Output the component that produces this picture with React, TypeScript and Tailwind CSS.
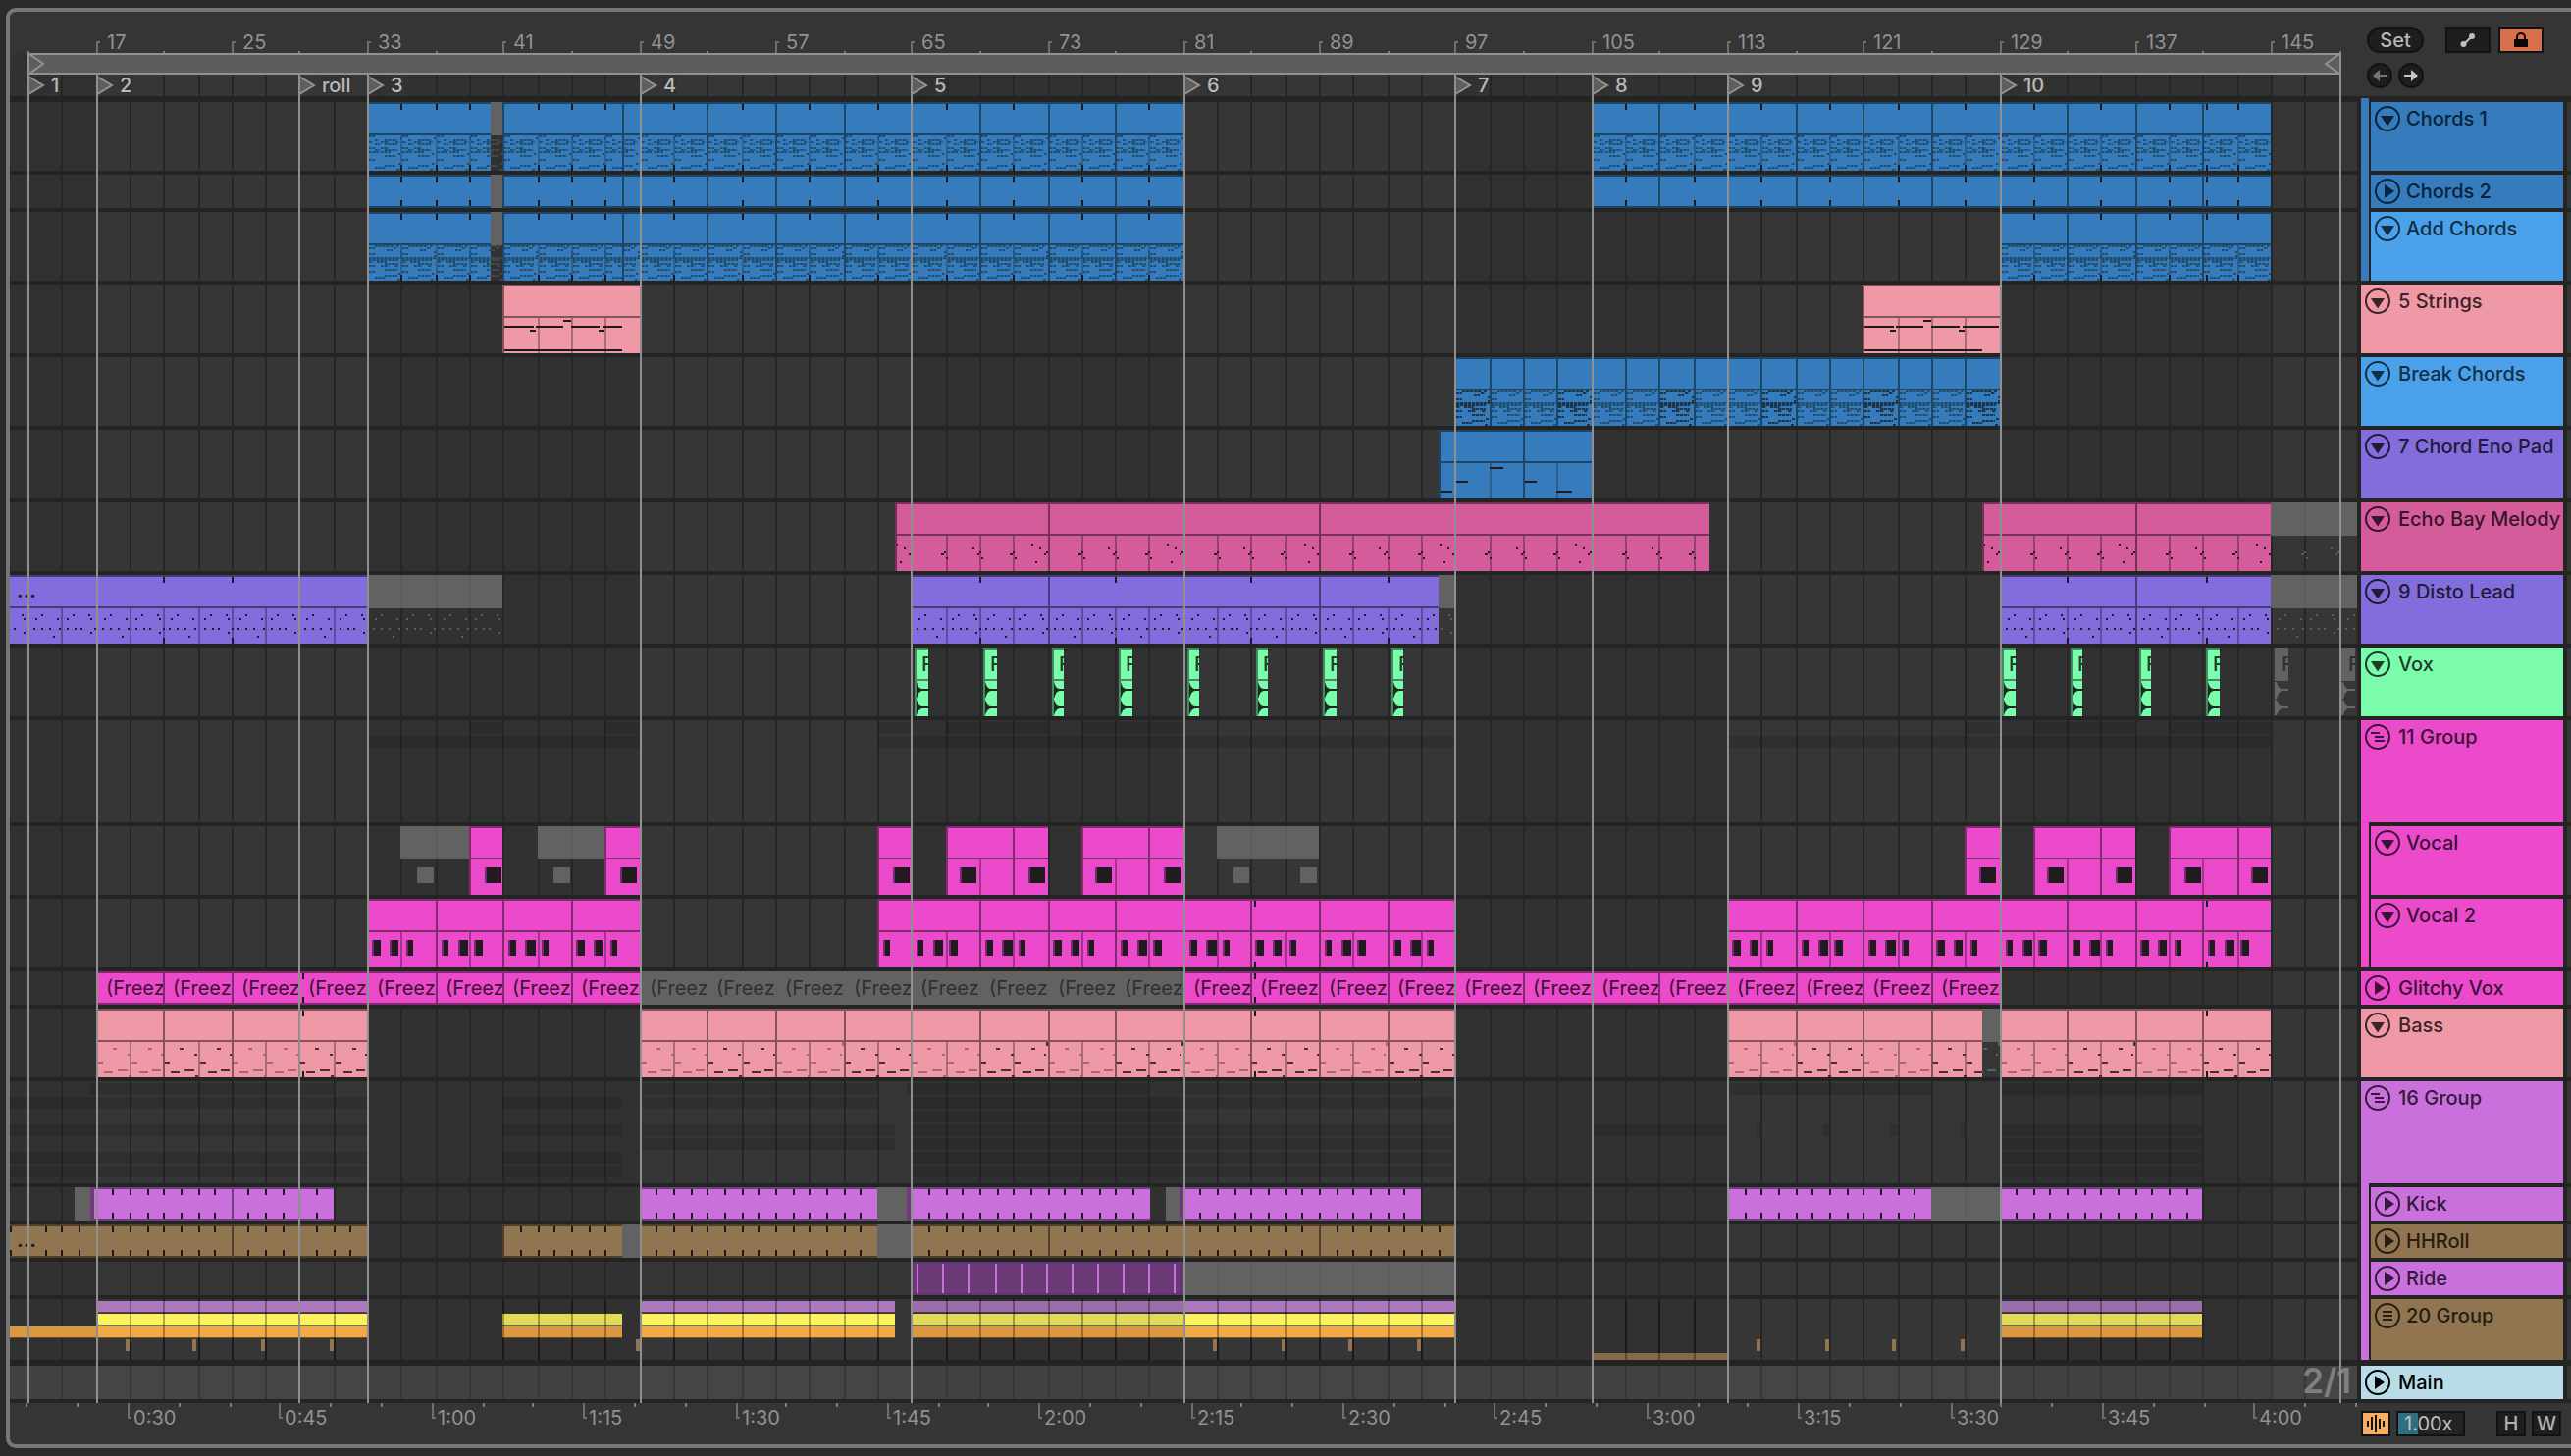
import React from "react";

/* ---------- time axis ---------- */

const PX_PER_BAR = 17.321;
const BAR_17 = 98.08;
const VIEW_LEFT = 10;
const START = 12;
const END = 152;

const even = (v: number) => 2 * Math.floor(v / 2);
const x = (bar: number) => even(BAR_17 + (bar - 17) * PX_PER_BAR) - VIEW_LEFT;
const range = (from: number, to: number, step: number) => {
  const out: number[] = [];
  for (let v = from; v < to; v += step) out.push(v);
  return out;
};

/* ---------- palette ---------- */

type Tone = {
  fill: string;
  edge: string;
  border: string;
  grid: string;
  soft: string;
  hard: string;
  ink: string;
};

const tones: Record<string, Tone> = {
  blue: { fill: "bg-[#367bbc]", edge: "bg-[#1c4566]", border: "border-[#1c4566]", grid: "bg-[#2a5f90]", soft: "fill-[#2a628f]", hard: "fill-[#214d70]", ink: "text-[#07243a]" },
  sky: { fill: "bg-[#4aa1ea]", edge: "bg-[#1c4566]", border: "border-[#1c4566]", grid: "bg-[#2a5f90]", soft: "fill-[#2a628f]", hard: "fill-[#1f4a6b]", ink: "text-[#122f47]" },
  pink: { fill: "bg-[#f099a6]", edge: "bg-[#85535b]", border: "border-[#85535b]", grid: "bg-[#a96b75]", soft: "fill-[#a46a73]", hard: "fill-[#4a2e33]", ink: "text-[#3b2427]" },
  violet: { fill: "bg-[#836cdb]", edge: "bg-[#473b78]", border: "border-[#473b78]", grid: "bg-[#5d4d9c]", soft: "fill-[#1c1826]", hard: "fill-[#1c1826]", ink: "text-[#211b38]" },
  rose: { fill: "bg-[#d45c9a]", edge: "bg-[#763355]", border: "border-[#763355]", grid: "bg-[#94416c]", soft: "fill-[#2a1620]", hard: "fill-[#2a1620]", ink: "text-[#36162a]" },
  green: { fill: "bg-[#7bfcad]", edge: "bg-[#448a60]", border: "border-[#448a60]", grid: "bg-[#448a60]", soft: "fill-[#1c3a2a]", hard: "fill-[#1c3a2a]", ink: "text-[#1d3d2a]" },
  magenta: { fill: "bg-[#eb4acb]", edge: "bg-[#822971]", border: "border-[#822971]", grid: "bg-[#a5348e]", soft: "fill-[#241a22]", hard: "fill-[#241a22]", ink: "text-[#3c1134]" },
  orchid: { fill: "bg-[#ca70dd]", edge: "bg-[#6f3d7a]", border: "border-[#6f3d7a]", grid: "bg-[#8f4f9c]", soft: "fill-[#2b1730]", hard: "fill-[#2b1730]", ink: "text-[#321b38]" },
  brown: { fill: "bg-[#917450]", edge: "bg-[#4f3e2a]", border: "border-[#4f3e2a]", grid: "bg-[#5d4a33]", soft: "fill-[#231b12]", hard: "fill-[#231b12]", ink: "text-[#241d14]" },
  ice: { fill: "bg-[#b8dde9]", edge: "bg-[#b8dde9]", border: "border-[#b8dde9]", grid: "bg-[#b8dde9]", soft: "fill-black", hard: "fill-black", ink: "text-black" },
};

/* ---------- note patterns, one unit = two bars: [x, y, w, h] ---------- */

type Note = [number, number, number, number?];
type Unit = { notes: Note[]; style: "soft" | "hard" | "dashed" | "dashedHard" };

const chordNotes: Note[] = [
  [0, 0, 6], [32, 2, 2], [6, 4, 4], [16, 4, 13], [0, 6, 4], [12, 6, 8], [27, 6, 4], [6, 8, 5], [16, 8, 13],
  [0, 12, 6], [12, 12, 8], [6, 14, 5], [16, 14, 13], [0, 16, 10], [12, 16, 10], [30, 18, 3], [16, 20, 12],
  [0, 24, 6], [30, 28, 3], [16, 30, 11], [6, 32, 10], [28, 34, 4],
];
const addNotes: Note[] = [
  [6, 0, 20], [28, 0, 3], [0, 2, 6], [25, 2, 4], [18, 4, 6], [32, 6, 2], [0, 8, 6], [32, 10, 2],
  [0, 12, 34], [0, 14, 30], [0, 16, 4], [8, 16, 10], [20, 18, 10], [0, 20, 6], [12, 20, 8], [16, 18, 13], [26, 20, 4],
  [16, 24, 13], [0, 26, 6], [30, 28, 3], [16, 30, 13], [6, 32, 10], [29, 34, 3],
];
const echoA: Note[] = [[29, 18, 3], [32, 16, 2], [34, 22, 2]];
const echoB: Note[] = [[25, 12, 2], [30, 18, 2], [32, 16, 2], [34, 22, 2]];
const echoC: Note[] = [[17, 8, 2], [25, 12, 2], [21, 26, 2], [30, 18, 2], [32, 16, 2]];
const distoA: Note[] = [[12, 6, 2], [6, 10, 2], [28, 10, 2], [4, 20, 2], [12, 20, 2], [20, 20, 2], [30, 20, 2], [24, 28, 2]];
const distoB: Note[] = [[10, 6, 2], [26, 6, 2], [4, 10, 2], [28, 10, 2], [4, 20, 2], [12, 20, 2], [18, 20, 2], [32, 20, 2], [28, 24, 2]];
const bassA: Note[] = [[15, 6, 4], [0, 20, 5], [6, 30, 9], [20, 28, 10], [31, 34, 3], [30, 12, 3]];
const bassB: Note[] = [[17, 6, 4], [0, 20, 6], [8, 30, 9], [21, 28, 9], [30, 12, 2], [32, 0, 2, 4]];

const soft = (notes: Note[]): Unit => ({ notes, style: "soft" });
const hard = (notes: Note[]): Unit => ({ notes, style: "hard" });
const dashed = (notes: Note[]): Unit => ({ notes, style: "dashed" });
const dashedHard = (notes: Note[]): Unit => ({ notes, style: "dashedHard" });

const patterns: Record<string, Unit[]> = {
  chords: [dashed(chordNotes)],
  add: [dashed(addNotes)],
  break: [dashed(addNotes), dashedHard(addNotes), dashed(addNotes)],
  echo: [soft(echoA), soft(echoB), soft(echoA), soft(echoC)],
  disto: [soft(distoA), soft(distoB)],
  bass: [soft(bassA), soft(bassB), hard(bassA), hard(bassB)],
};

const box = (bx: number, y: number, w: number, h = 2) => `M${bx} ${y}h${w}v${h}h${-w}z`;

function patternPaths(name: string, s: number, e: number) {
  const units = patterns[name];
  let low = "";
  let high = "";
  let deep = "";
  const first = 65 + 2 * Math.floor((s - 65) / 2);
  for (const bar of range(first, e, 2)) {
    const n = Math.round((bar - 65) / 2);
    const unit = units[((n % units.length) + units.length) % units.length];
    const ox = x(bar) + 2;
    for (const [nx, y, w, h] of unit.notes) {
      if (unit.style === "soft") low += box(ox + nx, y, w, h);
      else if (unit.style === "hard") high += box(ox + nx, y, w, h);
      else {
        low += box(ox + nx, y, w, h);
        for (let k = 0; k < w; k += 4) {
          if (unit.style === "dashed") high += box(ox + nx + k, y, Math.min(2, w - k), h);
          else deep += box(ox + nx + k, y, Math.min(3, w - k), h);
        }
      }
    }
  }
  return { low, high, deep };
}

/* ---------- session data ---------- */

type Clip = {
  s: number;
  e: number;
  cuts?: number[];
  ticks?: number[];
  off?: boolean;
  label?: string;
  more?: boolean;
};
type Extra = { px: number; y: number; w: number; h?: number; off?: boolean };
type Lane = {
  id: string;
  height: string;
  tone: string;
  tall?: boolean;
  pattern?: string;
  clips: Clip[];
  extras?: Extra[];
  kind?: "vox" | "overview" | "stack" | "ride" | "blocks" | "main";
};

const seg = (s: number, e: number, step: number, more: Partial<Clip> = {}): Clip => ({
  s,
  e,
  cuts: range(s + step, e, step),
  ...more,
});

const chordsLeft: Clip[] = [
  { s: 33, e: 40.25, ticks: [35, 37, 39] },
  { s: 40.25, e: 41, off: true },
  { s: 41, e: 49, cuts: [48], ticks: [43, 45, 47] },
  seg(49, 81, 4, { ticks: range(51, 81, 4) }),
];
const everyBar = (s: number, e: number, skip: number[] = []) => range(s + 1, e, 1).filter((b) => !skip.includes(b));

const strings = (start: number, tail: number): Extra[] => {
  const o = x(start);
  return [
    { px: o + 2, y: 8, w: 30 }, { px: o + 34, y: 8, w: 28 }, { px: o + 62, y: 2, w: 8 }, { px: o + 28, y: 12, w: 6 },
    { px: o + 70, y: 8, w: 29 }, { px: o + 102, y: 8, w: tail }, { px: o + 98, y: 12, w: 6 }, { px: o + 2, y: 32, w: 120 },
  ];
};

const vocalClips: Clip[] = [
  { s: 35, e: 39, off: true }, { s: 39, e: 41 },
  { s: 43, e: 47, off: true }, { s: 47, e: 49 },
  { s: 63, e: 65 }, { s: 67, e: 73, cuts: [71] }, { s: 75, e: 81, cuts: [79] },
  { s: 83, e: 89, off: true },
  { s: 127, e: 129 }, { s: 131, e: 137, cuts: [135] }, { s: 139, e: 145, cuts: [143] },
];
const vocalBlocks: Extra[] = [
  { px: 415, y: 8, w: 17, off: true }, { px: 554, y: 8, w: 17, off: true },
  { px: 1247, y: 8, w: 16, off: true }, { px: 1315, y: 8, w: 17, off: true },
  ...[486, 624, 902, 970, 1040, 1108, 1178, 2009, 2078, 2148, 2218, 2286].map((px) => ({ px, y: 8, w: 15, h: 16 })),
];

const vocal2Blocks: Extra[] = [...range(33, 49, 4), ...range(65, 97, 4), ...range(113, 145, 4)].flatMap((bar, i) => {
  const o = x(bar);
  const shapes = [
    [[7, 7], [25, 7], [42, 5]],
    [[8, 5], [25, 8], [41, 7]],
    [[8, 6], [25, 9], [42, 5]],
  ][i % 3];
  return shapes.map(([dx, w]) => ({ px: o + dx, y: 8, w, h: 16 }));
});
vocal2Blocks.push({ px: 892, y: 8, w: 5, h: 16 });

const glitchy: Clip[] = range(17, 129, 4).map((s) => ({
  s,
  e: s + 4,
  off: s >= 49 && s < 81,
  label: "(Freez",
  ticks: s === 29 || s === 85 ? [s + 0.15] : [],
}));

const vox: Clip[] = [
  ...range(65.25, 97, 4).map((s) => ({ s, e: s + 0.75, label: "F" })),
  ...range(129.2, 145, 4).map((s) => ({ s, e: s + 0.75, label: "F" })),
  { s: 145.2, e: 146, label: "F", off: true },
  { s: 149.2, e: 150, label: "F", off: true },
];

const lanes: Lane[] = [
  { id: "chords1", height: "h-[74px]", tone: "blue", tall: true, pattern: "chords", clips: [...chordsLeft, seg(105, 145, 4, { ticks: [...range(107, 145, 4), 141.15] })] },
  { id: "chords2", height: "h-[38px]", tone: "blue", clips: [...chordsLeft, seg(105, 145, 4, { ticks: [...range(107, 145, 4), 141.15] })] },
  { id: "add", height: "h-[74px]", tone: "blue", tall: true, pattern: "add", clips: [...chordsLeft, seg(129, 145, 4, { ticks: [...range(131, 145, 4), 141.15] })] },
  { id: "strings", height: "h-[74px]", tone: "pink", tall: true, clips: [{ s: 41, e: 49 }, { s: 121, e: 129 }], extras: [...strings(41, 20), ...strings(121, 37)] },
  { id: "break", height: "h-[74px]", tone: "blue", tall: true, pattern: "break", clips: [seg(97, 129, 2)] },
  {
    id: "eno", height: "h-[74px]", tone: "blue", tall: true, clips: [{ s: 96, e: 105, cuts: [101] }],
    extras: [{ px: 1508, y: 4, w: 14 }, { px: 1474, y: 18, w: 12 }, { px: 1544, y: 18, w: 12 }, { px: 1458, y: 28, w: 12 }, { px: 1576, y: 28, w: 16 }],
  },
  { id: "echo", height: "h-[74px]", tone: "rose", tall: true, pattern: "echo", clips: [{ s: 64, e: 112, cuts: [73, 81, 89, 97] }, { s: 128, e: 145, cuts: [137] }, { s: 145, e: END, off: true }] },
  {
    id: "disto", height: "h-[74px]", tone: "violet", tall: true, pattern: "disto",
    clips: [
      { s: START - 1, e: 33, ticks: [21, 25], more: true }, { s: 33, e: 41, off: true },
      { s: 65, e: 96, cuts: [73, 81, 89], ticks: [69, 77, 85, 93] }, { s: 96, e: 97, off: true },
      { s: 129, e: 145, cuts: [137], ticks: [133, 141.15] }, { s: 145, e: END, off: true },
    ],
  },
  { id: "vox", height: "h-[74px]", tone: "green", tall: true, kind: "vox", clips: vox },
  { id: "group11", height: "h-[108px]", tone: "magenta", kind: "overview", clips: [] },
  { id: "vocal", height: "h-[74px]", tone: "magenta", tall: true, kind: "blocks", clips: vocalClips, extras: vocalBlocks },
  { id: "vocal2", height: "h-[74px]", tone: "magenta", tall: true, kind: "blocks", clips: [seg(33, 49, 4), { s: 63, e: 97, cuts: range(65, 97, 4), ticks: [85.15] }, seg(113, 145, 4, { ticks: [141.15] })], extras: vocal2Blocks },
  { id: "glitchy", height: "h-[38px]", tone: "magenta", clips: glitchy },
  {
    id: "bass", height: "h-[74px]", tone: "pink", tall: true, pattern: "bass",
    clips: [seg(17, 33, 4, { ticks: [29.15] }), seg(49, 97, 4, { ticks: [85.15] }), seg(113, 128, 4), { s: 128, e: 129, off: true }, seg(129, 145, 4, { ticks: [141.15] })],
  },
  { id: "group16", height: "h-[108px]", tone: "orchid", kind: "overview", clips: [] },
  {
    id: "kick", height: "h-[38px]", tone: "orchid",
    clips: [
      { s: 15.75, e: 16.7, off: true }, { s: 16.7, e: 31, cuts: [16.8, 25], ticks: everyBar(17, 31, [25, 29]) },
      { s: 49, e: 63, ticks: everyBar(49, 63) }, { s: 63, e: 64.7, off: true },
      { s: 64.7, e: 79.1, cuts: [64.8], ticks: everyBar(65, 79) }, { s: 80, e: 80.75, off: true },
      { s: 80.75, e: 95, cuts: [80.85], ticks: everyBar(81, 95) },
      { s: 113, e: 125, ticks: everyBar(113, 125) }, { s: 125, e: 129, off: true }, { s: 129, e: 141, ticks: everyBar(129, 141) },
    ],
  },
  {
    id: "hhroll", height: "h-[38px]", tone: "brown",
    clips: [
      { s: START - 1, e: 33, cuts: [25], ticks: [12, ...everyBar(13, 33, [17, 25, 29])], more: true },
      { s: 41, e: 48, ticks: everyBar(41, 48) }, { s: 48, e: 49, off: true },
      { s: 49, e: 63, ticks: everyBar(49, 63) }, { s: 63, e: 65, off: true },
      { s: 65, e: 97, cuts: [73, 89], ticks: everyBar(65, 97, [73, 81, 89]) },
    ],
  },
  { id: "ride", height: "h-[38px]", tone: "orchid", kind: "ride", clips: [{ s: 81, e: 97, off: true }] },
  { id: "group20", height: "h-[68px]", tone: "brown", kind: "stack", clips: [] },
  { id: "main", height: "h-[38px]", tone: "ice", kind: "main", clips: [] },
];

const overview: Record<string, [string, [number, number][]][]> = {
  group11: [
    ["top-[2px]", [[39, 41], [47, 49], [63, 65], [67, 73], [75, 81], [127, 129], [131, 137], [139, 145]]],
    ["top-[16px]", [[33, 49], [63, 97], [113, 145]]],
  ],
  group16: [
    ["top-[2px]", [[16.7, 31], [49, 63], [64.7, 79], [80.75, 95], [113, 125], [129, 141]]],
    ["top-[16px]", [[11, 33], [41, 48], [49, 63], [65, 97]]],
    ["top-[30px]", [[65, 81]]],
    ["top-[44px]", [[11, 33], [41, 48], [49, 64], [65, 97], [105, 113], [114.7, 115], [118.7, 119], [122.6, 123], [126.7, 127], [129, 141]]],
    ["top-[58px]", [[49, 64], [65, 97], [129, 141]]],
    ["top-[72px]", [[11, 33], [41, 48], [65, 97], [129, 141]]],
    ["top-[86px]", [[11, 33], [41, 48], [65, 97], [129, 141]]],
  ],
};

/* ---------- timeline pieces ---------- */

const VLine = ({ at, className }: { at: number; className: string }) => (
  <div className={`absolute w-[2px] ${className}`} style={{ left: at }} />
);

function Grid() {
  return (
    <div className="absolute inset-0 overflow-hidden bg-[#363636]" aria-hidden>
      {[1, 33, 65, 97, 129].map((b) => (
        <div key={b} className="absolute inset-y-0 bg-[#313131]" style={{ left: x(b), width: x(b + 16) - x(b) }} />
      ))}
      {range(13, END, 2).map((b) => (
        <VLine key={b} at={x(b)} className="inset-y-0 bg-[#262626]" />
      ))}
    </div>
  );
}

function Notes({ lane, clip, left }: { lane: Lane; clip: Clip; left: number }) {
  if (!lane.pattern) return null;
  const tone = tones[lane.tone];
  const { low, high, deep } = patternPaths(lane.pattern, clip.s, clip.e);
  const muted = lane.tone === "blue" ? "fill-[#444444]" : "fill-[#5c5c5c]";
  return (
    <svg className="absolute inset-0 h-full w-full" aria-hidden>
      <g transform={`translate(${-left} 0)`}>
        <path d={low} className={clip.off ? muted : tone.soft} />
        <path d={high} className={clip.off ? muted : tone.hard} />
        <path d={deep} className="fill-[#1b3549]" />
      </g>
    </svg>
  );
}

function Wave({ off }: { off?: boolean }) {
  return (
    <svg className="absolute inset-0 h-full w-full" aria-hidden>
      <path
        d="M0 1L2 1C4 7 5 8 9 8H16V10H9C5 10 4 12 2 18L0 19ZM2 19C4 25 5 26 9 26H16V28H9C5 28 4 30 2 35H0V19Z"
        className={off ? "fill-[#676767]" : "fill-[#1c2a22]"}
      />
    </svg>
  );
}

function ClipView({ lane, clip }: { lane: Lane; clip: Clip }) {
  const tone = tones[lane.tone];
  const left = x(clip.s);
  const width = x(clip.e) - left;
  const inner = range(1 + 2 * Math.ceil((clip.s - 0.99) / 2), clip.e, 2).filter((b) => b < clip.e);
  const labelClass = `block truncate text-clip leading-[30px] text-[20px] ${lane.kind === "vox" ? "pl-[7px] font-medium" : "pl-[10px]"} ${clip.off ? "text-[#303030]" : tone.ink}`;

  if (clip.off) {
    return (
      <div className="absolute inset-y-0 flex flex-col overflow-hidden" style={{ left, width }}>
        <div className="h-[34px] shrink-0 bg-[#626262] py-[2px]">
          {clip.label && <span className={labelClass}>{clip.label}</span>}
        </div>
        {lane.tall && (
          <div className="relative flex-1">
            <Notes lane={lane} clip={clip} left={left} />
            {lane.kind === "vox" && <Wave off />}
          </div>
        )}
        {!clip.label && inner.map((b) => <VLine key={b} at={x(b) - left} className="top-0 h-[34px] bg-black/5" />)}
      </div>
    );
  }

  return (
    <div className={`absolute inset-y-0 flex flex-col overflow-hidden ${tone.fill}`} style={{ left, width }}>
      <div className={`h-[34px] shrink-0 border-y-2 ${tone.border}`}>
        {clip.label && <span className={labelClass}>{clip.label}</span>}
        {clip.more && <span className="block pl-[23px] text-[20px] leading-[28px] font-bold text-black/80">...</span>}
      </div>
      {lane.tall && (
        <div className="relative flex-1">
          {lane.kind !== "vox" && inner.map((b) => <VLine key={b} at={x(b) - left} className={`inset-y-0 ${tone.grid}`} />)}
          <Notes lane={lane} clip={clip} left={left} />
          {lane.kind === "vox" && <Wave />}
        </div>
      )}
      <VLine at={0} className={`inset-y-0 ${tone.edge}`} />
      {clip.cuts?.map((b) => <VLine key={b} at={x(b) - left} className={`inset-y-0 ${tone.edge}`} />)}
      {clip.ticks?.map((b) => (
        <React.Fragment key={b}>
          <VLine at={x(b) - left} className="top-[2px] h-[6px] bg-[#1a1a1a]" />
          <VLine at={x(b) - left} className={`h-[6px] bg-[#1a1a1a] ${lane.tall ? "bottom-0" : "bottom-[2px]"}`} />
        </React.Fragment>
      ))}
    </div>
  );
}

function Extras({ lane }: { lane: Lane }) {
  return (
    <svg className="absolute inset-x-0 top-[34px] h-[36px] w-full" aria-hidden>
      {lane.extras!.map((n, i) => (
        <g key={i}>
          {lane.kind === "blocks" && !n.off && <rect x={n.px - 2} y={n.y} width={2} height={16} className="fill-[#7a2a6b]" />}
          <rect
            x={n.px}
            y={n.y}
            width={n.w}
            height={lane.kind === "blocks" ? 16 : (n.h ?? 2)}
            className={n.off ? "fill-[#626262]" : lane.kind === "blocks" ? "fill-[#211a20]" : "fill-[#1c1c1c]"}
          />
        </g>
      ))}
    </svg>
  );
}

function Overview({ id }: { id: string }) {
  return (
    <>
      {overview[id].map(([top, spans]) =>
        spans.map(([s, e]) => (
          <div key={`${top}${s}`} className={`absolute h-[12px] bg-black/12 ${top}`} style={{ left: x(s), width: x(e) - x(s) }} />
        )),
      )}
    </>
  );
}

function Stack() {
  const body: [number, number, boolean][] = [[17, 33, true], [49, 64, true], [65, 81, false], [81, 97, true], [129, 141, false]];
  const short: [number, number, boolean] = [41, 48, false];
  const bars = (top: string, on: string, dim: string, spans: [number, number, boolean][]) =>
    spans.map(([s, e, lit]) => (
      <div
        key={`${top}${s}`}
        className={`absolute h-[12px] border-b border-black/50 ${top} ${lit ? on : dim}`}
        style={{ left: x(s), width: x(e) - x(s) }}
      />
    ));
  const hits = [118, 186, 256, 326, 638, 1226, 1296, 1364, 1434, 1780, 1850, 1918, 1988];
  return (
    <>
      {bars("top-[2px]", "bg-[#ad78be]", "bg-[#9b6dab]", body)}
      {bars("top-[15px]", "bg-[#fdf25e]", "bg-[#e3da57]", [...body, short])}
      {bars("top-[28px]", "bg-[#f2a947]", "bg-[#da9840]", [[START - 1, 17, false], ...body, short])}
      {hits.map((h) => (
        <div key={h} className="absolute top-[41px] h-[12px] w-[4px] bg-[#917450]" style={{ left: h }} />
      ))}
      <div className="absolute bottom-0 h-[7px] bg-[#86684a]" style={{ left: x(105), width: x(113) - x(105) }} />
      {[...range(17, 33, 2), ...range(41, 48, 2), ...range(49, 97, 2), ...range(105, 113, 2), ...range(129, 141, 2)].map((b) => (
        <VLine key={b} at={x(b)} className="inset-y-0 bg-black/30" />
      ))}
    </>
  );
}

function Ride() {
  return (
    <div
      className="absolute inset-y-0 overflow-hidden border-y-2 border-[#643570] bg-[#6b3a76]"
      style={{ left: x(65), width: x(81) - x(65) }}
    >
      {range(65.35, 81, 1.51).map((b) => (
        <VLine key={b} at={x(b) - x(65)} className="inset-y-0 bg-[#ca70dd]" />
      ))}
    </div>
  );
}

function LaneView({ lane }: { lane: Lane }) {
  const gap = lane.id === "group20" ? "border-b-[6px]" : "border-b-4";
  return (
    <div className={`relative overflow-hidden border-[#242424] ${gap} ${lane.height} ${lane.kind === "main" ? "bg-white/8" : ""}`}>
      {lane.clips.map((c) => <ClipView key={c.s} lane={lane} clip={c} />)}
      {lane.extras && <Extras lane={lane} />}
      {lane.kind === "overview" && <Overview id={lane.id} />}
      {lane.kind === "stack" && <Stack />}
      {lane.kind === "ride" && <Ride />}
      {lane.kind === "main" && (
        <span className="absolute right-[6px] top-0 text-[35px] leading-[30px] font-semibold text-[#7f7f7f]">2/1</span>
      )}
    </div>
  );
}

const locators: [number, string][] = [
  [13, "1"], [17, "2"], [29, "roll"], [33, "3"], [49, "4"], [65, "5"], [81, "6"], [97, "7"], [105, "8"], [113, "9"], [129, "10"],
];

function BeatRuler() {
  return (
    <div className="relative h-[42px]">
      {range(13, 150, 4).map((b) =>
        (b - 17) % 8 === 0 ? (
          <div key={b} className="absolute bottom-0 flex h-[22px]" style={{ left: x(b) }}>
            <i className="mt-[10px] w-[2px] bg-[#6e6e6e]" />
            <i className="mt-[10px] h-[2px] w-[2px] bg-[#6e6e6e]" />
            <span className="ml-[7px] text-[20px] leading-[22px] text-[#919191]">{b}</span>
          </div>
        ) : (
          <VLine key={b} at={x(b)} className="bottom-0 h-[2px] bg-[#7a7a7a]" />
        ),
      )}
    </div>
  );
}

function LoopBar() {
  const left = x(13);
  return (
    <div className="relative h-[22px] bg-[#323232]">
      <div className="absolute inset-y-0 flex justify-between border-2 border-[#919191] bg-[#5d5d5d]" style={{ left, width: x(149) + 2 - left }}>
        <svg className="h-[18px] w-[16px]" viewBox="0 0 16 18" fill="none" aria-hidden>
          <path d="M0 -1L14 9L0 19" stroke="#919191" strokeWidth="2" />
        </svg>
        <svg className="h-[18px] w-[16px]" viewBox="0 0 16 18" fill="none" aria-hidden>
          <path d="M16 -1L2 9L16 19" stroke="#919191" strokeWidth="2" />
        </svg>
      </div>
      <div className="absolute inset-y-0 right-0 bg-[#353535]" style={{ left: x(149) + 2 }} />
    </div>
  );
}

function LocatorRow() {
  return (
    <div className="relative h-[22px]">
      {locators.map(([b, name]) => (
        <button key={b} type="button" className="absolute flex h-[22px] items-center" style={{ left: x(b) }}>
          <svg className="h-[22px] w-[18px]" viewBox="0 0 18 22" aria-hidden>
            <path d="M1 2L16 11L1 20Z" fill="#5e5e5e" stroke="#939393" strokeWidth="2" />
          </svg>
          <span className="ml-[5px] bg-[#333333] px-[1px] text-[20px] leading-[22px] font-medium text-[#b9b9b9]">{name}</span>
        </button>
      ))}
    </div>
  );
}

function TimeRuler() {
  return (
    <div className="relative h-[42px] overflow-hidden">
      {range(-2, 45, 1).map((n) => {
        const left = even(130.9 + (n * 154.78) / 3) - VIEW_LEFT;
        if (n % 3 !== 0) return <VLine key={n} at={left} className="top-0 h-[4px] bg-[#7a7a7a]" />;
        const sec = 30 + n * 5;
        return (
          <div key={n} className="absolute top-0 flex h-[28px] items-start" style={{ left }}>
            <i className="h-[16px] w-[2px] bg-[#6e6e6e]" />
            <i className="mt-[14px] h-[2px] w-[2px] bg-[#6e6e6e]" />
            <span className="mt-[4px] ml-[2px] text-[20px] leading-[22px] text-[#919191]">
              {Math.floor(sec / 60)}:{String(sec % 60).padStart(2, "0")}
            </span>
          </div>
        );
      })}
    </div>
  );
}

function Timeline() {
  return (
    <section className="flex min-w-0 flex-1 flex-col overflow-hidden" aria-label="Arrangement">
      <BeatRuler />
      <LoopBar />
      <div className="relative flex flex-col">
        <Grid />
        <LocatorRow />
        <div className="relative h-[6px] bg-[#242424]" />
        {lanes.map((l) => <LaneView key={l.id} lane={l} />)}
        {locators.map(([b]) => <VLine key={b} at={x(b)} className="inset-y-0 bg-[#8f8f8f]" />)}
        <VLine at={x(149)} className="inset-y-0 bg-[#8f8f8f]" />
      </div>
      <TimeRuler />
    </section>
  );
}

/* ---------- track headers ---------- */

type Icon = "down" | "right" | "group" | "list";

const iconPaths: Record<Icon, React.ReactNode> = {
  down: <path d="M6 10H20L13 20.5Z" fill="currentColor" />,
  right: <path d="M10 6V20L20 13Z" fill="currentColor" />,
  group: <path d="M6 9H15M10 13H19M10 17H20" stroke="currentColor" strokeWidth="2" />,
  list: <path d="M8 9H18M8 13H18M8 17H18" stroke="currentColor" strokeWidth="2" />,
};

function Header({ name, tone, icon, height, nested }: { name: string; tone: string; icon: Icon; height: string; nested?: boolean }) {
  const t = tones[tone];
  return (
    <div className={`flex shrink-0 items-start overflow-hidden ${height} ${t.fill} ${t.ink}`}>
      <div className={`flex h-[34px] min-w-0 items-center pl-[4px] ${nested ? "gap-[6px]" : "gap-[8px]"}`}>
        <button type="button" aria-label={`Fold ${name}`} className="h-[26px] w-[26px] shrink-0">
          <svg viewBox="0 0 26 26" className="h-[26px] w-[26px]" fill="none" aria-hidden>
            <circle cx="13" cy="13" r="12" stroke="currentColor" strokeWidth="2" />
            {iconPaths[icon]}
          </svg>
        </button>
        <span className="overflow-hidden text-[20px] leading-[26px] font-medium whitespace-nowrap">{name}</span>
      </div>
    </div>
  );
}

function Group({ rail, children }: { rail: string; children: React.ReactNode }) {
  return (
    <div className="flex">
      <div className={`-mt-1 w-2 shrink-0 ${rail}`} />
      <div className="ml-[2px] flex min-w-0 flex-1 flex-col gap-1">{children}</div>
    </div>
  );
}

const square = "flex h-[26px] items-center justify-center border-2 border-[#121212]";

function Headers() {
  return (
    <aside className="flex w-[218px] shrink-0 flex-col" aria-label="Tracks">
      <div className="h-[86px] pt-[16px] pl-[10px]">
        <div className="flex">
          <button type="button" className="h-[26px] w-[58px] rounded-full border-2 border-[#121212] bg-[#1e1e1e] text-[20px] leading-[22px] font-medium text-[#b8b8b8]">Set</button>
          <button type="button" aria-label="Automation mode" className={`${square} ml-[22px] w-[46px] bg-[#1e1e1e]`}>
            <svg viewBox="0 0 16 16" className="h-[16px] w-[16px]" aria-hidden>
              <path d="M4 12L12 4" stroke="#c0c0c0" strokeWidth="2" />
              <circle cx="3.5" cy="12" r="3" fill="#c0c0c0" />
              <circle cx="12" cy="4" r="3" fill="#c0c0c0" />
            </svg>
          </button>
          <button type="button" aria-label="Lock envelopes" className={`${square} ml-[8px] w-[46px] bg-[#d8704b]`}>
            <svg viewBox="0 0 14 16" className="h-[16px] w-[14px]" fill="none" aria-hidden>
              <path d="M3 8V5A4 4 0 0 1 11 5V8" stroke="#0c0808" strokeWidth="2" />
              <path d="M0 7H14V15H0Z" fill="#0c0808" />
            </svg>
          </button>
        </div>
        <div className="mt-[10px] flex gap-[6px]">
          {[false, true].map((next) => (
            <button key={String(next)} type="button" aria-label={next ? "Next locator" : "Previous locator"} className={`flex h-[26px] w-[26px] items-center justify-center rounded-full border-2 border-[#121212] bg-[#1e1e1e] ${next ? "text-[#c6c6c6]" : "text-[#777777]"}`}>
              <svg viewBox="0 0 16 14" className={`h-[14px] w-[16px] shrink-0 ${next ? "" : "rotate-180"}`} aria-hidden>
                <path d="M1 6H8V1L15 7L8 13V8H1Z" fill="currentColor" />
              </svg>
            </button>
          ))}
        </div>
      </div>

      <div className="flex gap-1 bg-[#242424] pt-[6px] pb-1 pl-1">
        <div className="flex w-[206px] flex-col gap-1">
          <Group rail="bg-[#367bbc]">
            <Header nested name="Chords 1" tone="blue" icon="down" height="h-[70px]" />
            <Header nested name="Chords 2" tone="blue" icon="right" height="h-[34px]" />
            <Header nested name="Add Chords" tone="sky" icon="down" height="h-[70px]" />
          </Group>
          <Header name="5 Strings" tone="pink" icon="down" height="h-[70px]" />
          <Header name="Break Chords" tone="sky" icon="down" height="h-[70px]" />
          <Header name="7 Chord Eno Pad" tone="violet" icon="down" height="h-[70px]" />
          <Header name="Echo Bay Melody" tone="rose" icon="down" height="h-[70px]" />
          <Header name="9 Disto Lead" tone="violet" icon="down" height="h-[70px]" />
          <Header name="Vox" tone="green" icon="down" height="h-[70px]" />
          <Header name="11 Group" tone="magenta" icon="group" height="h-[104px]" />
          <Group rail="bg-[#eb4acb]">
            <Header nested name="Vocal" tone="magenta" icon="down" height="h-[70px]" />
            <Header nested name="Vocal 2" tone="magenta" icon="down" height="h-[70px]" />
          </Group>
          <Header name="Glitchy Vox" tone="magenta" icon="right" height="h-[34px]" />
          <Header name="Bass" tone="pink" icon="down" height="h-[70px]" />
          <Header name="16 Group" tone="orchid" icon="group" height="h-[104px]" />
          <Group rail="bg-[#ca70dd]">
            <Header nested name="Kick" tone="orchid" icon="right" height="h-[34px]" />
            <Header nested name="HHRoll" tone="brown" icon="right" height="h-[34px]" />
            <Header nested name="Ride" tone="orchid" icon="right" height="h-[34px]" />
            <Header nested name="20 Group" tone="brown" icon="list" height="h-[62px]" />
          </Group>
          <div className="pt-[2px]">
            <Header name="Main" tone="ice" icon="right" height="h-[34px]" />
          </div>
        </div>
        <div className="flex flex-1 flex-col">
          {lanes.map((l) => (
            <div key={l.id} className={`border-[#242424] bg-[#363636] ${l.id === "group20" ? "border-b-[6px]" : l.id === "main" ? "mb-[-4px] border-b-4" : "border-b-4"} ${l.height}`} />
          ))}
        </div>
      </div>

      <div className="flex h-[42px] items-start pt-[8px] pl-[4px]">
        <button type="button" aria-label="Show waveform" className={`${square} w-[30px] bg-[#f6ae64]`}>
          <svg viewBox="0 0 18 18" className="h-[18px] w-[18px]" aria-hidden>
            <path d="M1 6V12M5 2V16M9 0V18M13 4V14M17 6V12" stroke="#141414" strokeWidth="2" />
          </svg>
        </button>
        <input
          aria-label="Waveform zoom"
          defaultValue="1.00x"
          className="ml-[6px] h-[26px] w-[70px] border-2 border-[#121212] bg-[#232323] bg-[linear-gradient(90deg,#2f6f82_20px,transparent_20px)] pl-[6px] text-[20px] leading-[22px] text-[#c0c0c0]"
        />
        <button type="button" className={`${square} ml-[32px] w-[30px] bg-[#1e1e1e] text-[20px] font-medium text-[#b0b0b0]`}>H</button>
        <button type="button" className={`${square} ml-[6px] w-[30px] bg-[#1e1e1e] text-[20px] font-medium text-[#b0b0b0]`}>W</button>
      </div>
    </aside>
  );
}

export default function App() {
  return (
    <main className="flex min-h-screen items-start overflow-hidden bg-[#2a2a2a] py-2 pl-[6px] font-['Inter',sans-serif]">
      <div className="flex min-w-0 flex-1 overflow-hidden rounded-l-[10px] border-4 border-r-0 border-[#767676] bg-[#353535]">
        <Timeline />
        <Headers />
      </div>
    </main>
  );
}
